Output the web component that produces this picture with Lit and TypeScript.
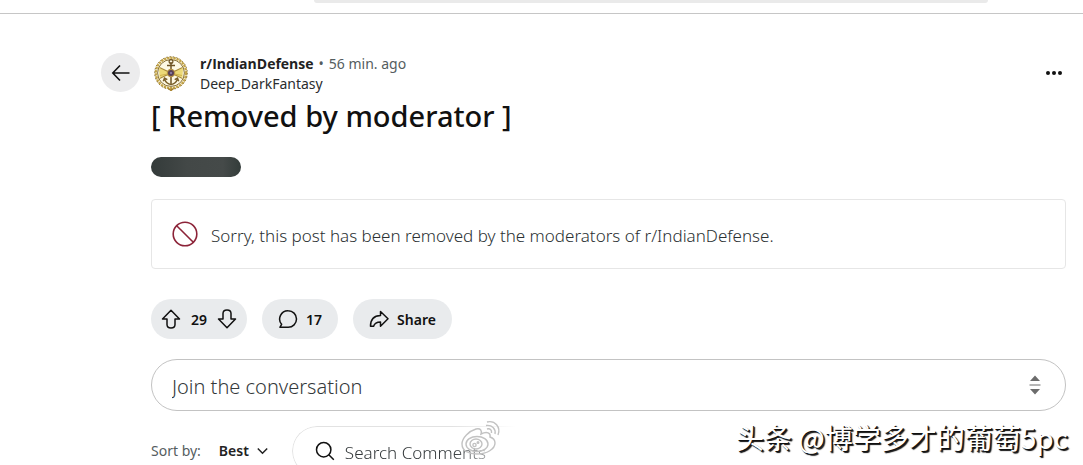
import { LitElement, html, css, svg } from "lit";
import { customElement } from "lit/decorators.js";

const upArrow = svg`<path d="M10 1.200 18.500 10h-4.500v5.500c0 2.100-1.600 3.500-4 3.500s-4-1.400-4-3.500V10H1.500z"/>`;

@customElement("community-crest")
class CommunityCrest extends LitElement {
  static styles = css`
    :host { display: block; flex: none; width: 34px; height: 36px; }
    svg { display: block; width: 100%; height: 100%; }
  `;
  render() {
    return html`<svg viewBox="0 0 34 36" fill="none" aria-hidden="true">
      <circle cx="17" cy="18" r="15.4" fill="#fdf9e4"/>
      <circle cx="17" cy="18" r="15.2" stroke="#c4a549" stroke-width="2.400" stroke-dasharray="2.4 .8"/>
      <circle cx="17" cy="18" r="16.3" stroke="#7d642c" stroke-width=".9" stroke-dasharray="1.4 2"/>
      <circle cx="17" cy="18" r="13.4" stroke="#7d642c" stroke-width=".9"/>
      <path d="M5 13 17 17 29 13 28.500 22.500 17 19.500 5.500 22.500z" fill="#ecd977"/>
      <path d="M5.500 12.500 28.500 23.500M28.500 12.500 5.500 23.500" stroke="#a88a38" stroke-width="1.100"/>
      <path d="M6 20.500l10-2M28 20.500l-10-2" stroke="#d0b44c"/>
      <path d="M17 7v22M13 10.500h8" stroke="#6e5424" stroke-width="1.500"/>
      <circle cx="17" cy="6.600" r="1.900" stroke="#6e5424" stroke-width="1.200"/>
      <path d="M10.500 24c1.200 3.500 3.500 5 6.500 5.600 3-.6 5.300-2.100 6.500-5.600M9.300 26.300l1.200-3.200 2.800 1.600M24.700 26.300l-1.200-3.200-2.800 1.600" stroke="#7a5f29" stroke-width="1.400"/>
      <circle cx="17" cy="18" r="4.200" fill="#b79445"/>
      <circle cx="17" cy="18" r="3" fill="#5a4258"/>
      <circle cx="17" cy="18" r="1.100" fill="#8f83b0"/>
      <path d="M14.500 33.500 17 35.500l2.500-2" stroke="#a37c22" stroke-width="1.400"/>
    </svg>`;
  }
}

@customElement("app-root")
class AppRoot extends LitElement {
  static styles = css`
    :host {
      display: block;
      position: relative;
      height: 100vh;
      overflow: hidden;
      background: #fff;
      color: #111;
      font-family: "Noto Sans", "Open Sans", sans-serif;
      font-size: 14px;
      line-height: 20px;
    }
    * { box-sizing: border-box; }
    button, input, select { font: inherit; color: inherit; margin: 0; padding: 0; border: 0; background: none; }
    a { color: inherit; text-decoration: none; }
    svg { display: block; flex: none; fill: none; stroke: currentColor; }
    .topbar { height: 14px; padding: 0 95px 0 314px; border-bottom: 1px solid #c6c6c6; }
    .topsearch { height: 3px; background: #eaeaea; border-radius: 0 0 8px 8px; }
    .page { display: flex; gap: 11px; padding: 38px 17px 0 101px; }
    .back {
      display: grid; place-items: center; flex: none;
      width: 39px; height: 39px; border-radius: 50%; background: #ececed;
      margin-top: 1px;
    }
    .post { flex: 1; min-width: 0; }
    .head { display: flex; align-items: center; height: 42px; padding-left: 3px; }
    .names { flex: 1; margin-left: 12px; padding-top: 2px; }
    .line { display: flex; gap: 5px; color: #2a2d2e; }
    .community { font-family: "Open Sans", sans-serif; font-weight: 700; color: #222; }
    .time { color: #555d60; }
    .more { width: 24px; height: 24px; display: grid; place-items: center; }
    h1 { margin: 5px 0 0; font-size: 29px; line-height: 34px; font-weight: 500; color: #111; }
    .flair { width: 90px; height: 20px; margin-top: 24px; border-radius: 10px; background: linear-gradient(90deg, #343b3a, #434847 40%, #454a49 80%, #333c3a); }
    .notice {
      display: flex; align-items: center; gap: 13px;
      height: 70px; margin-top: 22px; padding: 0 20px;
      border: 1px solid #e6e6e6; border-radius: 4px;
      font-size: 17px; line-height: 24px; color: #2b3133; font-weight: 300;
    }
    .notice p { margin: 0; padding-top: 3px; }
    .banned { color: #8c2338; }
    .actions { display: flex; gap: 15px; margin-top: 30px; }
    .pill { display: flex; align-items: center; justify-content: center; gap: 8px; height: 40px; border-radius: 20px; background: #e9ebed; font-weight: 600; font-size: 14px; }
    .pill span { padding-top: 1px; }
    .votes { width: 96px; gap: 10px; }
    .comments { width: 76px; }
    .share { width: 99px; }
    .join {
      display: flex; align-items: center; height: 52px; margin-top: 20px; padding: 0 20px;
      border: 1px solid #c3c3c3; border-radius: 26px; font-size: 20px;
    }
    .join input { flex: 1; min-width: 0; height: 40px; outline: 0; font-weight: 300; padding-top: 3px; }
    .join input::placeholder, .find input::placeholder { color: #34393b; opacity: 1; }
    .stepper { width: 20px; height: 24px; display: grid; place-items: center; color: #6c6c6c; }
    .tools { display: flex; align-items: flex-start; margin-top: 15px; }
    .sort { display: flex; align-items: center; height: 50px; color: #555d60; }
    .choice { display: flex; align-items: center; margin-left: 18px; color: #222; }
    .choice select { appearance: none; width: 38px; font-weight: 600; }
    .find {
      display: flex; align-items: center; gap: 10px; height: 50px; width: 320px; margin-left: 24px; padding-left: 22px;
      border-radius: 25px; font-size: 17px; border: 1px solid #e2e2e2;
      border-right-color: transparent;
      mask-image: linear-gradient(90deg, #000 50%, transparent 70%);
    }
    .find input { width: 160px; height: 40px; outline: 0; font-weight: 300; padding-top: 2px; }
    .weibo { position: absolute; left: 460px; top: 419px; color: #c2c2c2; }
    .credit {
      position: absolute; right: 15px; bottom: 8px; color: #fff; white-space: nowrap;
      font: 400 28px/40px "Noto Sans CJK SC", sans-serif;
      text-shadow: 2px 2px 1px #111, 1px 1px 0 #111;
    }
  `;

  render() {
    return html`
      <header class="topbar"><div class="topsearch"></div></header>
      <main class="page">
        <button class="back" aria-label="Back">
          <svg width="20" height="20" viewBox="0 0 20 20" stroke-width="1.600"><path d="M18.500 10H2M9 2.500 1.800 10 9 17.500"/></svg>
        </button>
        <article class="post">
          <div class="head">
            <community-crest></community-crest>
            <div class="names">
              <div class="line"><a class="community" href="#">r/IndianDefense</a><span class="time">•</span><span class="time">56 min. ago</span></div>
              <div class="line"><a href="#">Deep_DarkFantasy</a></div>
            </div>
            <button class="more" aria-label="More options">
              <svg width="18" height="6" viewBox="0 0 18 6"><g fill="#111" stroke="none"><circle cx="3" cy="3" r="2"/><circle cx="9" cy="3" r="2"/><circle cx="15" cy="3" r="2"/></g></svg>
            </button>
          </div>
          <h1>[ Removed by moderator ]</h1>
          <div class="flair"></div>
          <section class="notice">
            <svg class="banned" width="26" height="26" viewBox="0 0 26 26" stroke-width="1.600"><circle cx="13" cy="13" r="11.800"/><path d="m4.700 4.700 16.600 16.600"/></svg>
            <p>Sorry, this post has been removed by the moderators of r/IndianDefense.</p>
          </section>
          <div class="actions">
            <div class="pill votes">
              <button aria-label="Upvote"><svg width="20" height="20" viewBox="0 0 20 20" stroke-width="1.500" stroke-linejoin="round">${upArrow}</svg></button>
              <span>29</span>
              <button aria-label="Downvote"><svg width="20" height="20" viewBox="0 0 20 20" stroke-width="1.500" stroke-linejoin="round"><g transform="rotate(180 10 10)">${upArrow}</g></svg></button>
            </div>
            <button class="pill comments">
              <svg width="20" height="20" viewBox="0 0 20 20" stroke-width="1.500" stroke-linejoin="round"><path d="M10.200 1.700a8.300 8.300 0 1 1 0 16.600H1.900l1.700-3A8.300 8.300 0 0 1 10.200 1.700z"/></svg>
              <span>17</span>
            </button>
            <button class="pill share">
              <svg width="20" height="20" viewBox="0 0 20 20" stroke-width="1.500" stroke-linejoin="round"><path d="M11.500 2.500 19 9.800l-7.500 7.400V13C7.500 13 5.500 14.300 4.600 17.200H1.500C1.500 10.500 5 6.700 11.500 6.500z"/></svg>
              <span>Share</span>
            </button>
          </div>
          <div class="join">
            <input type="text" aria-label="Join the conversation" placeholder="Join the conversation">
            <button class="stepper" aria-label="Resize">
              <svg width="12" height="20" viewBox="0 0 12 20"><path d="M6 0.500 11 6H1zM6 19.500 11 14H1z" fill="currentColor" stroke="none"/><path d="M.5 10h11"/></svg>
            </button>
          </div>
          <div class="tools">
            <div class="sort">
              <label for="sort">Sort by:</label>
              <span class="choice">
                <select id="sort"><option>Best</option></select>
                <svg width="11" height="8" viewBox="0 0 11 8" stroke-width="1.500"><path d="m.8 1.500 4.700 4.700 4.700-4.700"/></svg>
              </span>
            </div>
            <div class="find">
              <svg width="20" height="20" viewBox="0 0 20 20" stroke-width="1.500"><circle cx="8.700" cy="8.700" r="7.200"/><path d="m13.800 13.800 5 5"/></svg>
              <input type="search" aria-label="Search Comments" placeholder="Search Comments">
            </div>
          </div>
        </article>
      </main>
      <svg class="weibo" width="42" height="38" viewBox="0 0 42 38" stroke-width="1.400" aria-hidden="true">
        <path d="M16 10C9 12 2 19 2 25c0 7 7 10 15 10 10 0 18-5 18-11 0-3-2-5-5-6 1-4-3-6-9-3 1-3 0-6-5-5z"/>
        <ellipse cx="17" cy="25" rx="11" ry="7.500"/><ellipse cx="16" cy="25" rx="6" ry="5"/><circle cx="14.500" cy="26" r="1.600"/><circle cx="18" cy="23.500" r=".8"/>
        <path d="M27 3c8-2 14 5 11 13M26 6.500c6-1 10 3.500 9 8.500M27 10c3-1 5 1 4.500 4"/>
      </svg>
      <div class="credit">头条 @博学多才的葡萄5pc</div>
    `;
  }
}
